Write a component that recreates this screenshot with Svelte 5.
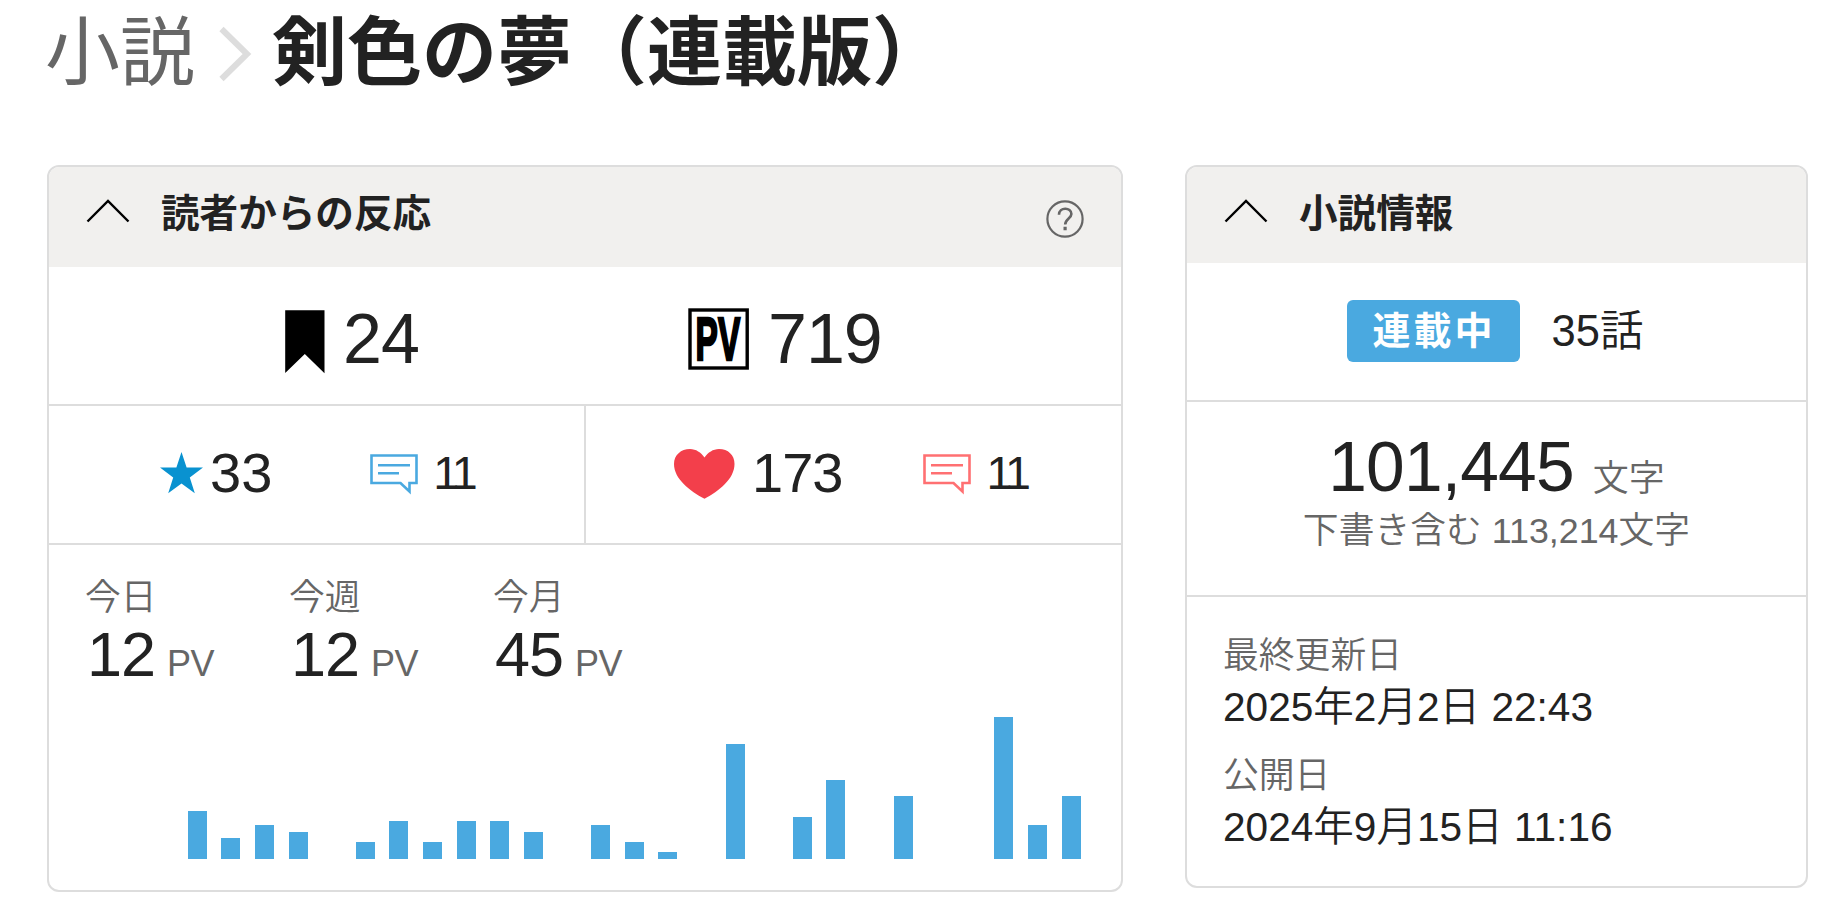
<script lang="ts">
  const periods = [
    { label: '今日', count: 12 },
    { label: '今週', count: 12 },
    { label: '今月', count: 45 },
  ]

  // daily PV bar heights, oldest first
  const bars = [
    0, 0, 0, 48, 21, 34, 27, 0, 17, 38, 17, 38, 38, 27, 0,
    34, 17, 7, 0, 115, 0, 42, 79, 0, 63, 0, 0, 142, 34, 63,
  ]

  const dates = [
    { label: '最終更新日', value: '2025年2月2日 22:43' },
    { label: '公開日', value: '2024年9月15日 11:16' },
  ]
</script>

{#snippet chevron()}
  <svg class="chevron" width="44" height="24" viewBox="0 0 44 24">
    <path d="M1.5 22.5 L22 2 L42.5 22.5" fill="none" stroke="#000" stroke-width="2.4" />
  </svg>
{/snippet}

{#snippet comment()}
  <svg class="comment" width="48" height="41" viewBox="0 0 48 41">
    <path d="M1.5 1.5 H46.5 V29 H39.5 V37.5 L30.5 29 H1.5 Z M8 11.3 H40 M8 19.2 H29" fill="none" stroke="currentColor" stroke-width="2.6" />
  </svg>
{/snippet}

<main>
  <h1>
    <span class="crumb">小説</span>
    <svg class="sep" width="32" height="54" viewBox="0 0 32 54">
      <path d="M2.5 2 L28 27 L2.5 52" fill="none" stroke="#ddd" stroke-width="6" />
    </svg>
    <span>剣色の夢（連載版）</span>
  </h1>

  <div class="panels">
    <section class="reactions">
      <header>
        {@render chevron()}
        <h2>読者からの反応</h2>
        <svg class="help" width="38" height="38" viewBox="0 0 38 38" fill="none" stroke="#666" stroke-width="2.2">
          <circle cx="19" cy="19" r="17.6" />
          <path d="M13 14.8 C13 6.8 25.4 6.8 25.4 14 C25.4 18.3 19.2 18.8 19.2 24.6" stroke-width="2.6" />
          <path d="M19.1 26.8 V30.3" stroke-width="3.2" />
        </svg>
      </header>

      <div class="row totals">
        <svg class="bookmark" width="40" height="64" viewBox="0 0 40 64">
          <path d="M0.2 0.3 H39.5 V63.3 L19.8 44 L0.2 63 Z" fill="#000" />
        </svg>
        <span class="num followers">24</span>
        <svg class="pv" width="61" height="62" viewBox="0 0 61 62">
          <rect x="2" y="2" width="57.2" height="58" fill="none" stroke="#000" stroke-width="3.4" />
          <text transform="translate(7.6 52) scale(0.54 1)" font-size="62" font-weight="700" stroke="#000" stroke-width="2.6">PV</text>
        </svg>
        <span class="num">719</span>
      </div>

      <div class="row split">
        <div class="half stars">
          <svg class="star" width="43" height="42" viewBox="0 0 43 42">
            <path d="M21.5 0 L26.6 15.6 H43 L29.8 25.4 L34.8 41.2 L21.5 31.5 L8.2 41.2 L13.2 25.4 L0 15.6 H16.4 Z" fill="#0992d0" />
          </svg>
          <span class="num">33</span>
          {@render comment()}
          <span class="num small">11</span>
        </div>
        <div class="half hearts">
          <svg class="heart" width="61" height="50" viewBox="0 0 61 50">
            <path d="M30.5 49.8 C16 42 0 30 0 15 C0 6 7 0 16 0 C22 0 27 3.5 30.5 8.5 C34 3.5 39 0 45 0 C54 0 60.5 6 60.5 15 C60.5 30 45 42 30.5 49.8 Z" fill="#f33f4b" />
          </svg>
          <span class="num likes">173</span>
          {@render comment()}
          <span class="num small">11</span>
        </div>
      </div>

      <div class="access">
        <dl>
          {#each periods as period}
            <div>
              <dt>{period.label}</dt>
              <dd>{period.count}<small>PV</small></dd>
            </div>
          {/each}
        </dl>
        <div class="chart">
          {#each bars as height}
            <i style="height: {height}px"></i>
          {/each}
        </div>
      </div>
    </section>

    <section class="info">
      <header>
        {@render chevron()}
        <h2>小説情報</h2>
      </header>

      <div class="row status">
        <span class="badge">連載中</span>
        <span class="episodes">35話</span>
      </div>

      <div class="row letters">
        <p class="count">101,445<small>文字</small></p>
        <p class="draft">下書き含む 113,214文字</p>
      </div>

      <dl class="dates">
        {#each dates as date}
          <dt>{date.label}</dt>
          <dd>{date.value}</dd>
        {/each}
      </dl>
    </section>
  </div>
</main>

<style>
  :global(body) {
    background: #fff;
  }

  main {
    height: 920px;
    overflow: hidden;
    box-sizing: border-box;
    padding: 0 20px 0 47px;
    font-family: "Liberation Sans", "Noto Sans CJK JP", sans-serif;
    color: #222;
  }

  h1, h2, p, dl, dd {
    margin: 0;
  }

  svg {
    display: block;
    flex: none;
    overflow: visible;
  }

  h1 {
    display: flex;
    align-items: center;
    height: 107px;
    font-size: 75px;
    line-height: 107px;
    white-space: nowrap;
  }

  .crumb {
    font-weight: 400;
    color: #666;
    margin-left: -2px;
  }

  .sep {
    margin: 0 21px 0 24px;
  }

  .panels {
    display: flex;
    align-items: flex-start;
    justify-content: space-between;
    margin-top: 58px;
  }

  section {
    box-sizing: border-box;
    border: 2px solid #ddd;
    border-radius: 12px;
    overflow: hidden;
  }

  .reactions {
    width: 1076px;
    height: 727px;
  }

  .info {
    width: 623px;
    height: 723px;
    margin-right: 1px;
  }

  header {
    display: flex;
    align-items: flex-start;
    box-sizing: border-box;
    height: 96px;
    padding: 0 37px;
    background: #f1f0ee;
  }

  .reactions header {
    height: 100px;
  }

  .chevron {
    margin-top: 32px;
  }

  h2 {
    flex: 1;
    margin-left: 31px;
    font-size: 38.6px;
    line-height: 93px;
  }

  .help {
    margin-top: 33px;
  }

  .row {
    box-sizing: border-box;
    border-bottom: 2px solid #ddd;
  }

  .num {
    font-size: 56px;
    line-height: 64px;
  }

  .totals {
    display: flex;
    align-items: center;
    height: 139px;
    padding: 12px 0 0 236px;
  }

  .totals .num {
    font-size: 70px;
    letter-spacing: -1px;
    margin-top: -6px;
  }

  .followers {
    width: 345px;
    margin-left: 18px;
  }

  .pv {
    margin: -6px 19px 0 0;
  }

  .split {
    display: flex;
    height: 139px;
  }

  .half {
    display: flex;
    box-sizing: border-box;
    align-items: center;
    width: 536px;
    padding-bottom: 4px;
  }

  .stars {
    width: 538px;
    border-right: 2px solid #ddd;
    padding-left: 111px;
  }

  .hearts {
    padding-left: 88px;
  }

  .star {
    margin: 0 7px 0 0;
  }

  .comment {
    margin-top: 3px;
  }

  .stars .comment {
    margin-left: 98px;
    color: #4aa9e0;
  }

  .heart {
    margin: 2px 17px 0 0;
  }

  .likes {
    letter-spacing: -1px;
  }

  .hearts .comment {
    margin-left: 81px;
    color: #ff7072;
  }

  .num.small {
    margin-left: 15px;
    font-size: 46.7px;
    letter-spacing: -4px;
  }

  .access {
    padding: 31px 40px 0 38px;
  }

  .access dl {
    display: flex;
  }

  .access dl div {
    width: 204px;
  }

  dt {
    font-size: 35.8px;
    font-weight: 350;
    line-height: 44px;
    color: #666;
  }

  .access dt {
    margin-left: -2px;
  }

  .access dd {
    font-size: 63px;
    line-height: 68px;
    letter-spacing: -1px;
  }

  small {
    font-size: 36px;
    color: #666;
  }

  .access small {
    margin-left: 12px;
    letter-spacing: -0.5px;
  }

  .chart {
    display: flex;
    align-items: flex-end;
    justify-content: space-between;
    height: 142px;
    margin-top: 19px;
  }

  .chart i {
    width: 19px;
    background: #4aa9e0;
  }

  .status {
    display: flex;
    align-items: center;
    justify-content: center;
    height: 139px;
    padding: 0 3px 2px 0;
    gap: 32px;
  }

  .badge {
    box-sizing: border-box;
    width: 173px;
    height: 62px;
    border-radius: 6px;
    padding-left: 2px;
    background: #4aa9e0;
    color: #fff;
    font-size: 38px;
    font-weight: 700;
    line-height: 62px;
    letter-spacing: 3px;
    text-align: center;
  }

  .episodes {
    font-size: 43.5px;
    line-height: 62px;
    font-weight: 350;
  }

  .letters {
    height: 195px;
    padding-top: 27px;
    text-align: center;
  }

  .count {
    height: 76px;
    font-size: 69.5px;
    line-height: 76px;
    letter-spacing: -0.8px;
  }

  .count small {
    margin-left: 19px;
    font-size: 36px;
    font-weight: 350;
    line-height: 1;
    letter-spacing: 0;
  }

  .draft {
    font-size: 35.8px;
    font-weight: 350;
    line-height: 52px;
    color: #666;
  }

  .dates {
    padding: 37px 36px 0;
  }

  .dates dd {
    margin-bottom: 18px;
    font-size: 40.6px;
    font-weight: 350;
    line-height: 58px;
  }
</style>
